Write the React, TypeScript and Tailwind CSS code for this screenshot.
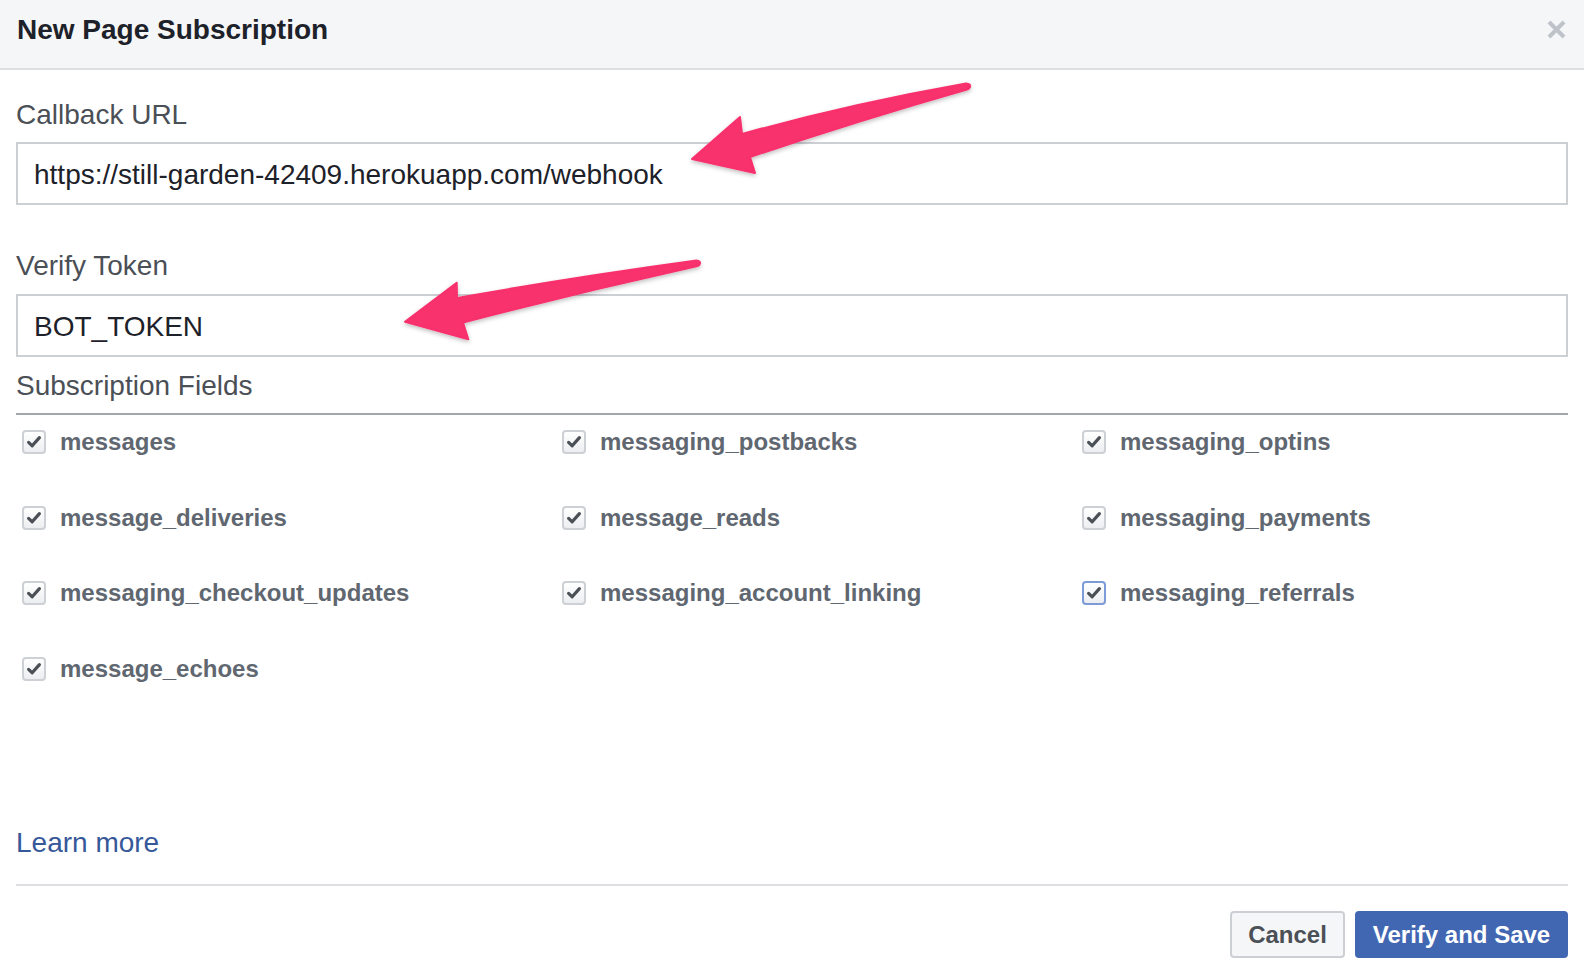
import React from "react";

const fields: { name: string; focus?: boolean }[] = [
  { name: "messages" },
  { name: "messaging_postbacks" },
  { name: "messaging_optins" },
  { name: "message_deliveries" },
  { name: "message_reads" },
  { name: "messaging_payments" },
  { name: "messaging_checkout_updates" },
  { name: "messaging_account_linking" },
  { name: "messaging_referrals", focus: true },
  { name: "message_echoes" },
];

function Check({ focus }: { focus?: boolean }) {
  return (
    <span
      className={
        "ml-[6px] flex h-[24px] w-[24px] shrink-0 items-center justify-center rounded-[4px] border-2 bg-gradient-to-b from-white to-[#eceef1] " +
        (focus ? "border-[#7d9bd6]" : "border-[#cdd0d5]")
      }
    >
      <svg width="16" height="16" viewBox="0 0 16 16">
        <path d="M2.6 8.4 L6.2 11.8 L13.4 3.6" fill="none" stroke="#4b4f56" strokeWidth="3.2" strokeLinecap="round" strokeLinejoin="round" />
      </svg>
    </span>
  );
}

export default function App() {
  return (
    <div className="relative h-[972px] w-[1584px] overflow-hidden bg-white font-['Liberation_Sans',Arial,sans-serif]">
      <header className="flex h-[70px] items-start justify-between border-b-2 border-[#dddfe2] bg-[#f5f6f7] pl-[17px] pr-[18px] pt-[14px]">
        <h1 className="text-[28px] font-bold leading-[32px] text-[#1d2129]">New Page Subscription</h1>
        <svg className="mt-[6px]" width="19" height="19" viewBox="0 0 19 19">
          <path d="M2 2 L17 17 M17 2 L2 17" stroke="#bec3c9" strokeWidth="4" strokeLinecap="butt" />
        </svg>
      </header>

      <main className="flex flex-col px-4 pt-[29px]">
        <label className="text-[28px] leading-[32px] text-[#4b4f56]">Callback URL</label>
        <div className="mt-[11px] flex h-[63px] items-center border-2 border-[#ccd0d5] bg-white pl-[16px] pt-[2px] text-[28px] leading-[32px] text-[#1d2129]">
          https://still-garden-42409.herokuapp.com/webhook
        </div>

        <label className="mt-[45px] text-[28px] leading-[32px] text-[#4b4f56]">Verify Token</label>
        <div className="mt-[12px] flex h-[63px] items-center border-2 border-[#ccd0d5] bg-white pl-[16px] pt-[2px] text-[28px] leading-[32px] text-[#1d2129]">
          BOT_TOKEN
        </div>

        <div className="mt-[13px] text-[28px] leading-[32px] text-[#4b4f56]">Subscription Fields</div>
        <div className="mt-[11px] h-[2px] bg-[#a3a6ab]" />

        <div className="mt-[13px] grid grid-cols-[540px_520px_1fr] gap-y-[47.6px]">
          {fields.map((f) => (
            <div key={f.name} className="flex h-[28px] items-center">
              <Check focus={f.focus} />
              <span className="ml-[14px] text-[24px] font-bold leading-[28px] text-[#606770]">{f.name}</span>
            </div>
          ))}
        </div>

        <a className="mt-[144.6px] self-start text-[28px] leading-[32px] text-[#365899]">Learn more</a>

        <div className="mt-[25px] h-[2px] bg-[#dddfe2]" />

        <div className="mt-[25px] flex justify-end gap-[10px]">
          <button className="flex h-[47px] w-[115px] items-center justify-center rounded-[4px] border-2 border-[#ccd0d5] bg-[#f5f6f7] text-[24px] font-bold text-[#4b4f56]">
            Cancel
          </button>
          <button className="flex h-[47px] w-[213px] items-center justify-center rounded-[4px] border-2 border-[#4267b2] bg-[#4267b2] text-[24px] font-bold text-white">
            Verify and Save
          </button>
        </div>
      </main>

      <svg className="pointer-events-none absolute left-0 top-0" width="1584" height="972" viewBox="0 0 1584 972">
        <defs>
          <filter id="sh" x="-10%" y="-30%" width="120%" height="160%">
            <feDropShadow dx="0" dy="2" stdDeviation="2" floodColor="#000" floodOpacity="0.25" />
          </filter>
        </defs>
        <g filter="url(#sh)" fill="#f8306d" stroke="#f8306d" strokeWidth="2" strokeLinejoin="round">
          <path d="M692 159 L740 117 L742 134 Q850 104 966 83.5 Q971 84 970 87 Q969 89 967 89.5 Q860 120 750 157 L755 173 Z" />
          <path d="M405 321.7 L456.7 282.7 L457 298 Q575 277 696.5 260.5 Q700.5 261 700 263.5 Q699.5 265.5 697.5 266 Q580 292 463 322.5 L468.3 339.3 Z" />
        </g>
      </svg>
    </div>
  );
}
